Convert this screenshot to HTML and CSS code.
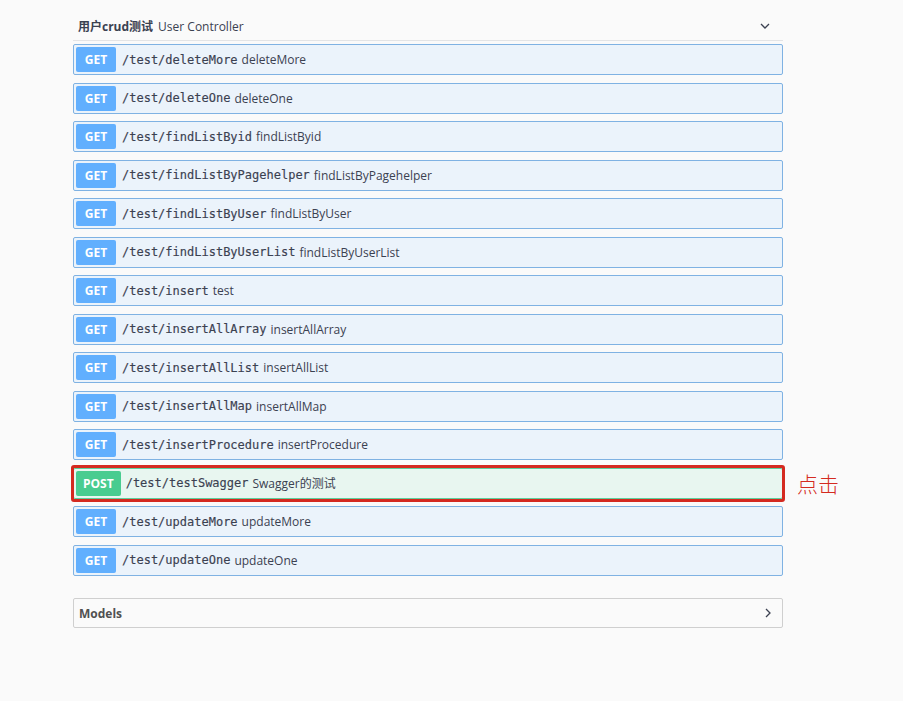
FILE: index.html
```html
<!DOCTYPE html>
<html lang="zh">
<head>
<meta charset="utf-8">
<title>Swagger</title>
<link rel="stylesheet" href="styles.css">
</head>
<body>
<div class="wrap">
  <div class="tag">
    <div class="tag-head">
      <span class="tag-name">用户crud测试</span>
      <span class="tag-desc">User Controller</span>
      <svg class="chev-down" width="10" height="6" viewBox="0 0 10 6"><path d="M1 1 L5 5 L9 1" fill="none" stroke="#3b4151" stroke-width="1.3"/></svg>
    </div>
    <div class="ops">
      <div class="op get"><span class="method">GET</span><span class="path">/test/deleteMore</span><span class="summary">deleteMore</span></div>
      <div class="op get"><span class="method">GET</span><span class="path">/test/deleteOne</span><span class="summary">deleteOne</span></div>
      <div class="op get"><span class="method">GET</span><span class="path">/test/findListByid</span><span class="summary">findListByid</span></div>
      <div class="op get"><span class="method">GET</span><span class="path">/test/findListByPagehelper</span><span class="summary">findListByPagehelper</span></div>
      <div class="op get"><span class="method">GET</span><span class="path">/test/findListByUser</span><span class="summary">findListByUser</span></div>
      <div class="op get"><span class="method">GET</span><span class="path">/test/findListByUserList</span><span class="summary">findListByUserList</span></div>
      <div class="op get"><span class="method">GET</span><span class="path">/test/insert</span><span class="summary">test</span></div>
      <div class="op get"><span class="method">GET</span><span class="path">/test/insertAllArray</span><span class="summary">insertAllArray</span></div>
      <div class="op get"><span class="method">GET</span><span class="path">/test/insertAllList</span><span class="summary">insertAllList</span></div>
      <div class="op get"><span class="method">GET</span><span class="path">/test/insertAllMap</span><span class="summary">insertAllMap</span></div>
      <div class="op get"><span class="method">GET</span><span class="path">/test/insertProcedure</span><span class="summary">insertProcedure</span></div>
      <div class="op post marked"><span class="method">POST</span><span class="path">/test/testSwagger</span><span class="summary">Swagger的测试</span><span class="note">点击</span></div>
      <div class="op get"><span class="method">GET</span><span class="path">/test/updateMore</span><span class="summary">updateMore</span></div>
      <div class="op get"><span class="method">GET</span><span class="path">/test/updateOne</span><span class="summary">updateOne</span></div>
    </div>
  </div>
  <div class="models">
    <span class="models-title">Models</span>
    <svg class="chev-right" width="6" height="10" viewBox="0 0 6 10"><path d="M1 1 L5 5 L1 9" fill="none" stroke="#3b4151" stroke-width="1.3"/></svg>
  </div>
</div>
</body>
</html>
```

FILE: styles.css
```css
html, body {
  margin: 0;
  padding: 0;
  background: #fafafa;
}
body {
  font-family: "Open Sans", "Noto Sans CJK SC", sans-serif;
  color: #3b4151;
}
.wrap {
  width: 710px;
  margin-left: 73px;
}
.tag-head {
  display: flex;
  align-items: center;
  height: 22px;
  padding: 15px 0 3px 5px;
  border-bottom: 1px solid #e3e4e6;
}
.tag-name {
  font-size: 12px;
  font-weight: 700;
  color: #3b4151;
  margin-right: 5px;
}
.tag-desc {
  font-size: 12px;
  color: #3b4151;
  flex: 1;
}
.chev-down {
  margin-right: 13px;
}
.ops {
  padding-top: 3px;
}
.op {
  position: relative;
  display: flex;
  align-items: center;
  box-sizing: border-box;
  height: 31px;
  padding: 2px;
  margin-bottom: 7.5px;
  border: 1px solid #7fb2e3;
  border-radius: 2px;
  background: #ebf3fb;
}
.op.post {
  border-color: #5ecf9c;
  background: #e8f6f0;
}
.method {
  box-sizing: border-box;
  min-width: 40px;
  height: 25px;
  line-height: 25px;
  padding: 0 6px;
  text-align: center;
  border-radius: 2px;
  background: #61affe;
  color: #fff;
  font-size: 12px;
  font-weight: 700;
  font-family: "Open Sans", sans-serif;
}
.post .method {
  background: #49cc90;
  padding: 0 7px;
}
.path {
  margin-left: 6px;
  font-family: "DejaVu Sans Mono", monospace;
  font-size: 12px;
  font-weight: 400;
  -webkit-text-stroke: 0.15px #3b4151;
  color: #3b4151;
}
.post .path {
  margin-left: 5px;
}
.summary {
  margin-left: 4px;
  font-size: 12px;
  color: #3b4151;
  font-family: "Open Sans", "Noto Sans CJK SC", sans-serif;
}
.marked::after {
  content: "";
  position: absolute;
  top: -4px;
  bottom: -4px;
  left: -3px;
  right: -3px;
  border: 3px solid #d42a20;
  border-radius: 3px;
  pointer-events: none;
}
.note {
  position: absolute;
  left: calc(100% + 15px);
  top: 50%;
  transform: translateY(-50%);
  font-size: 21px;
  font-weight: 300;
  color: #d42a20;
  font-family: "Noto Sans CJK SC", sans-serif;
  white-space: nowrap;
}
.models {
  display: flex;
  align-items: center;
  box-sizing: border-box;
  height: 30px;
  margin-top: 22.5px;
  padding: 0 11px 0 5px;
  border: 1px solid #cfcfcf;
  border-radius: 2px;
  background: #fafafa;
}
.models-title {
  flex: 1;
  font-size: 12px;
  font-weight: 700;
  color: #505050;
}
```
